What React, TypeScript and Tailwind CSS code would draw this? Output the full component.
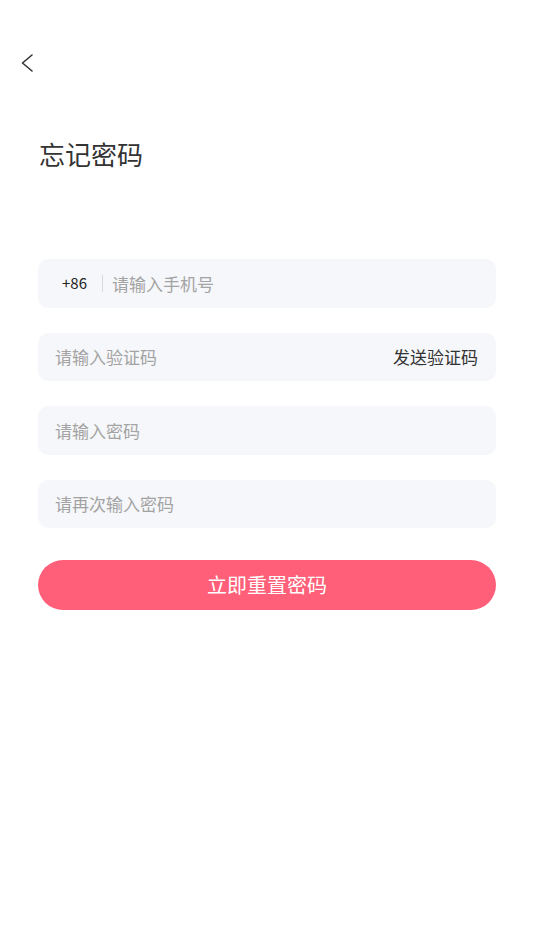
const fields = [
  { placeholder: "请输入验证码", action: "发送验证码" },
  { placeholder: "请输入密码" },
  { placeholder: "请再次输入密码" },
];

export default function App() {
  return (
    <div
      className="min-h-[950px] w-full bg-white"
      style={{ fontFamily: '"Noto Sans CJK SC", "Noto Sans", sans-serif' }}
    >
      {/* Back */}
      <div className="pt-[54px] pl-[21px]">
        <button className="flex h-[18px] w-[12px] items-center justify-center text-[#333]">
          <svg width="12" height="18" viewBox="0 0 12 18" fill="none">
            <polyline points="11,1 1.5,9 11,17" stroke="currentColor" strokeWidth="1.6" strokeLinecap="round" strokeLinejoin="round" />
          </svg>
        </button>
      </div>

      <div className="px-[38px]">
        <h1 className="mt-[64px] text-[26px] leading-[36px] font-normal text-[#333] pl-px">忘记密码</h1>

        <div className="mt-[87px] flex flex-col gap-[25px]">
          <div className="flex h-[48.5px] items-center rounded-[10px] bg-[#f6f7fa] pl-[24px] pr-[18px]">
            <span className="text-[15px] text-[#222]">+86</span>
            <span className="ml-[15px] mr-[9px] h-[17px] w-px bg-[#d8d8d8]" />
            <span className="text-[17px] text-[#a3a3a3]">请输入手机号</span>
          </div>
          {fields.map((f) => (
            <div
              key={f.placeholder}
              className="flex h-[48.5px] items-center justify-between rounded-[10px] bg-[#f6f7fa] pl-[17px] pr-[18px]"
            >
              <span className="text-[17px] text-[#a3a3a3]">{f.placeholder}</span>
              {f.action && <span className="text-[17px] text-[#333]">{f.action}</span>}
            </div>
          ))}
        </div>

        <button className="mt-[32px] flex h-[50px] w-full items-center justify-center rounded-full bg-[#ff5f79] text-[20px] text-white">
          立即重置密码
        </button>
      </div>
    </div>
  );
}
